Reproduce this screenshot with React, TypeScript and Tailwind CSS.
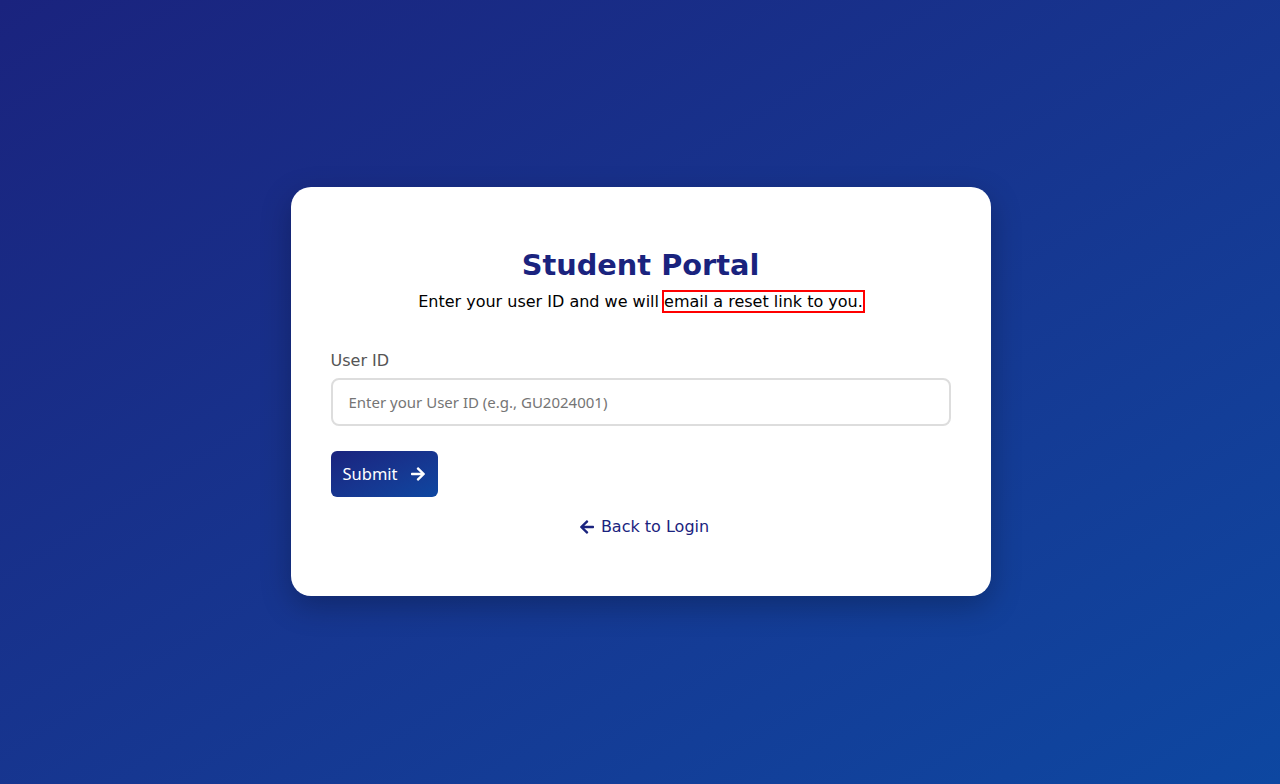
import { FaArrowLeft, FaArrowRight } from "react-icons/fa";

export default function App() {
    return (
        <div
            className="min-h-screen w-full flex items-center justify-center bg-gradient-to-br from-[#1a237e] to-[#0d47a1]"
            style={{ fontFamily: '"DejaVu Sans", sans-serif' }}
        >
            <div className="w-[700px] ml-[1px] mb-[1px] bg-white rounded-[20px] shadow-[0_10px_30px_rgba(0,0,0,0.25)] px-10 pt-[60px] pb-[54px]">
                <h1 className="text-center text-[28.8px] leading-[36px] font-bold text-[#1a237e]">
                    Student Portal
                </h1>
                <p className="text-center text-base leading-6 text-black mt-[7px]">
                    Enter your user ID and we will{" "}
                    <span className="outline-2 outline-solid outline-[#ff0000]">email a reset link to you.</span>
                </p>

                <div className="mt-[35px]">
                    <label className="block text-base text-[#555] mb-[5px]">User ID</label>
                    <input
                        type="text"
                        placeholder="Enter your User ID (e.g., GU2024001)"
                        className="w-full h-12 px-4 border-2 border-[#ddd] rounded-lg text-[15px] placeholder:text-[#757575] focus:outline-none"
                        style={{ fontFamily: '"Noto Sans", sans-serif' }}
                    />
                </div>

                <button
                    type="button"
                    className="mt-[25px] h-[46px] px-3 flex items-center gap-3 rounded-md text-white text-[16.5px] bg-gradient-to-br from-[#1a237e] to-[#0d47a1]"
                    style={{ fontFamily: '"Noto Sans", sans-serif' }}
                >
                    Submit
                    <FaArrowRight className="w-4 h-4" />
                </button>

                <div className="mt-[18px] text-center">
                    <a href="#" className="inline-flex items-center gap-[6px] ml-[7px] text-base text-[#1a237e]">
                        <FaArrowLeft />
                        Back to Login
                    </a>
                </div>
            </div>
        </div>
    );
}
